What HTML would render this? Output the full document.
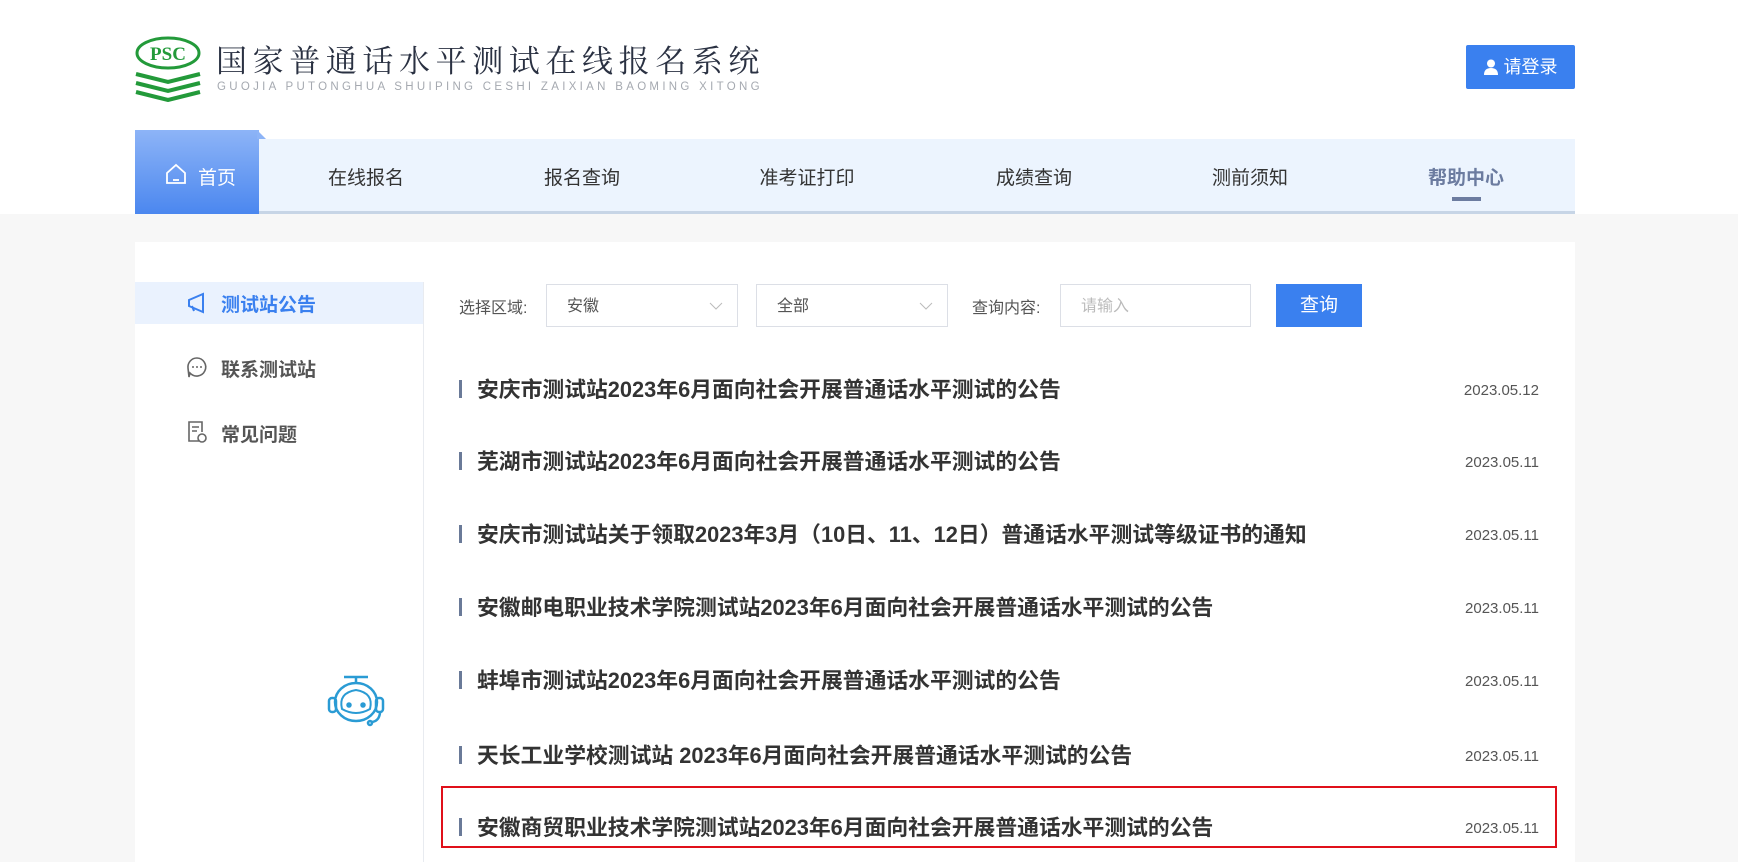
<!DOCTYPE html>
<html><head><meta charset="utf-8"><style>
*{margin:0;padding:0;box-sizing:border-box}
body{width:1738px;height:851px;overflow:hidden;background:#f7f7f7;font-family:"Liberation Sans","Noto Sans CJK SC",sans-serif;position:relative}
.abs{position:absolute}
.top{left:0;top:0;width:1738px;height:214px;background:#fff}
.title{left:216px;top:36px;font-size:31px;color:#2a3142;letter-spacing:5.6px;white-space:nowrap;font-family:"Noto Serif CJK SC","Noto Sans CJK SC",serif}
.pin{left:217px;top:81px;font-size:11.5px;color:#a5a9b0;letter-spacing:3.3px;white-space:nowrap}
.login{left:1466px;top:45px;width:109px;height:44px;background:#3a80ef;border-radius:2px;color:#fff;font-size:18px;line-height:44px;text-align:center}
.nav{left:135px;top:139px;width:1440px;height:75px;background:#ecf4fe;border-bottom:3px solid #c7d5e6}
.home{left:135px;top:130px;width:124px;height:84px;background:linear-gradient(#8db4f7,#4b87ef);color:#fff;font-size:19px}
.ni{top:163px;font-size:19px;color:#333;transform:translateX(-50%);white-space:nowrap}
.card{left:135px;top:242px;width:1440px;height:620px;background:#fff}
.side{left:423px;top:282px;width:1px;height:580px;background:#e8ebf0}
.act{left:135px;top:282px;width:288px;height:42px;background:#eaf2fe}
.mi{left:221px;font-size:19px;font-weight:bold;color:#555;white-space:nowrap}
.lab{top:294px;font-size:16px;color:#555}
.box{top:284px;height:43px;border:1px solid #dcdfe6;background:#fff;font-size:16px;color:#555;line-height:43px;padding-left:20px}
.btn{left:1276px;top:284px;width:86px;height:43px;background:#3a80ef;color:#fff;font-size:19px;text-align:center;line-height:43px}
.it{left:459px;width:1080px;height:30px}
.it b{position:absolute;left:0;top:5px;width:3px;height:18px;background:#6a7a98}
.it span{position:absolute;left:18px;top:-2px;font-size:21.8px;font-weight:bold;color:#333;white-space:nowrap}
.it i{position:absolute;right:0;top:7px;font-size:15px;font-style:normal;color:#555}
</style></head><body>
<div class="abs top"></div>
<svg class="abs" style="left:133px;top:36px" width="70" height="66" viewBox="0 0 70 66">
<ellipse cx="35" cy="17" rx="31" ry="15" fill="none" stroke="#239a3a" stroke-width="3"/>
<text x="35" y="24" text-anchor="middle" font-family="Liberation Serif" font-weight="bold" font-size="19" fill="#239a3a">PSC</text>
<g stroke="#239a3a" stroke-width="4" fill="none"><path d="M3 38 L35 46 L67 38"/><path d="M3 47 L35 55 L67 47"/><path d="M3 56 L35 64 L67 56"/></g>
</svg>
<div class="abs title">国家普通话水平测试在线报名系统</div>
<div class="abs pin">GUOJIA PUTONGHUA SHUIPING CESHI ZAIXIAN BAOMING XITONG</div>
<div class="abs login"><svg width="14" height="16" viewBox="0 0 14 16" style="vertical-align:-2px;margin-right:6px"><circle cx="7" cy="4.5" r="4" fill="#fff"/><path d="M0 16 Q0 9 7 9 Q14 9 14 16Z" fill="#fff"/></svg>请登录</div>
<div class="abs nav"></div>
<div class="abs home"><svg style="position:absolute;left:30px;top:33px" width="22" height="22" viewBox="0 0 22 22"><path d="M2 10 L11 2 L20 10 V20 H2Z" fill="none" stroke="#fff" stroke-width="1.8"/><path d="M8 17h6" stroke="#fff" stroke-width="1.8"/></svg><span style="position:absolute;left:63px;top:33px">首页</span></div>
<svg class="abs" style="left:257px;top:130px" width="10" height="9"><path d="M0 0 L9 9 H0Z" fill="#8db4f7"/></svg>
<div class="abs ni" style="left:366px">在线报名</div>
<div class="abs ni" style="left:582px">报名查询</div>
<div class="abs ni" style="left:807px">准考证打印</div>
<div class="abs ni" style="left:1034px">成绩查询</div>
<div class="abs ni" style="left:1250px">测前须知</div>
<div class="abs ni" style="left:1466px;color:#6c7ca0;font-weight:bold">帮助中心</div>
<div class="abs" style="left:1452px;top:197px;width:29px;height:4px;background:#6c7ca0"></div>
<div class="abs card"></div>
<div class="abs act"></div>
<div class="abs side"></div>
<svg class="abs" style="left:186px;top:292px" width="22" height="22" viewBox="0 0 22 22"><path d="M3 8 L17 2 V20 L3 14Z M6 14 L8 19" fill="none" stroke="#3a80ef" stroke-width="2"/></svg>
<div class="abs mi" style="top:290px;color:#3a80ef">测试站公告</div>
<svg class="abs" style="left:186px;top:356px" width="22" height="22" viewBox="0 0 22 22"><path d="M11 2 A9 9 0 1 1 4 17 L3 21 L2 12 A9 9 0 0 1 11 2Z" fill="none" stroke="#666" stroke-width="1.6"/><circle cx="7" cy="11" r="1" fill="#666"/><circle cx="11" cy="11" r="1" fill="#666"/><circle cx="15" cy="11" r="1" fill="#666"/></svg>
<div class="abs mi" style="top:355px">联系测试站</div>
<svg class="abs" style="left:186px;top:420px" width="22" height="24" viewBox="0 0 22 24"><path d="M13 21 H3 V2 H16 V12" fill="none" stroke="#666" stroke-width="1.6"/><path d="M6 7h7M6 11h5" stroke="#666" stroke-width="1.6"/><circle cx="16" cy="18" r="4" fill="none" stroke="#666" stroke-width="1.6"/></svg>
<div class="abs mi" style="top:420px">常见问题</div>
<div class="abs lab" style="left:459px">选择区域:</div>
<div class="abs box" style="left:546px;width:192px">安徽<svg style="position:absolute;right:14px;top:17px" width="14" height="8"><path d="M1 1 L7 7 L13 1" fill="none" stroke="#bbb"/></svg></div>
<div class="abs box" style="left:756px;width:192px">全部<svg style="position:absolute;right:14px;top:17px" width="14" height="8"><path d="M1 1 L7 7 L13 1" fill="none" stroke="#bbb"/></svg></div>
<div class="abs lab" style="left:972px">查询内容:</div>
<div class="abs box" style="left:1060px;width:191px;color:#bbb">请输入</div>
<div class="abs btn">查询</div>
<div class="abs it" style="top:375px"><b></b><span>安庆市测试站2023年6月面向社会开展普通话水平测试的公告</span><i>2023.05.12</i></div>
<div class="abs it" style="top:447px"><b></b><span>芜湖市测试站2023年6月面向社会开展普通话水平测试的公告</span><i>2023.05.11</i></div>
<div class="abs it" style="top:520px"><b></b><span>安庆市测试站关于领取2023年3月（10日、11、12日）普通话水平测试等级证书的通知</span><i>2023.05.11</i></div>
<div class="abs it" style="top:593px"><b></b><span>安徽邮电职业技术学院测试站2023年6月面向社会开展普通话水平测试的公告</span><i>2023.05.11</i></div>
<div class="abs it" style="top:666px"><b></b><span>蚌埠市测试站2023年6月面向社会开展普通话水平测试的公告</span><i>2023.05.11</i></div>
<div class="abs it" style="top:741px"><b></b><span>天长工业学校测试站 2023年6月面向社会开展普通话水平测试的公告</span><i>2023.05.11</i></div>
<div class="abs it" style="top:813px"><b></b><span>安徽商贸职业技术学院测试站2023年6月面向社会开展普通话水平测试的公告</span><i>2023.05.11</i></div>
<div class="abs" style="left:441px;top:786px;width:1116px;height:62px;border:2px solid #e0101a"></div>
<svg class="abs" style="left:324px;top:673px" width="64" height="56" viewBox="0 0 64 56" fill="none" stroke="#2a9bd4" stroke-width="2.5">
<path d="M20 4 H44 M32 4 V9"/><ellipse cx="32" cy="29" rx="21" ry="19"/><path d="M18 36 Q32 44 46 36 Q50 20 32 17 Q14 20 18 36Z" stroke-width="2"/><rect x="5" y="25" width="7" height="14" rx="3"/><rect x="52" y="25" width="7" height="14" rx="3"/><path d="M56 40 Q55 48 48 49"/><circle cx="46" cy="50" r="2"/><circle cx="25" cy="32" r="1.5" fill="#2a9bd4"/><circle cx="39" cy="32" r="1.5" fill="#2a9bd4"/>
</svg>
</body></html>
